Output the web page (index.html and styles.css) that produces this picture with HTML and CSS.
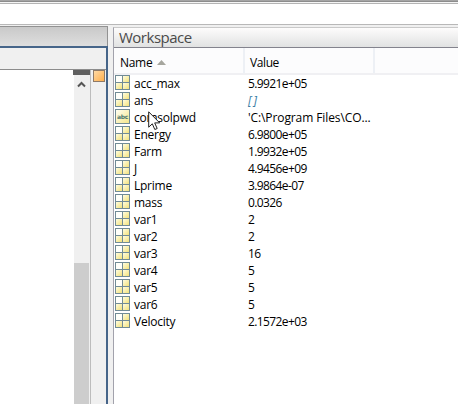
FILE: index.html
```html
<!DOCTYPE html>
<html lang="en">
<head>
<meta charset="utf-8">
<title>Workspace</title>
<link rel="stylesheet" href="styles.css">
</head>
<body>
<svg width="0" height="0" class="defs">
  <defs>
    <linearGradient id="cell" x1="0" y1="0" x2="1" y2="1"><stop offset="0" stop-color="#fffde0"/><stop offset="1" stop-color="#f3e27c"/></linearGradient>
    <symbol id="matrix" viewBox="0 0 15 15">
      <rect width="15" height="15" fill="#718b96"/>
      <rect x="1" y="1" width="6" height="6" fill="#fffffa"/>
      <rect x="8" y="1" width="6" height="6" fill="url(#cell)"/>
      <rect x="1" y="8" width="6" height="6" fill="url(#cell)"/>
      <rect x="8" y="8" width="6" height="6" fill="url(#cell)"/>
    </symbol>
  </defs>
</svg>
<div class="app">
  <div class="topbar"></div>
  <div class="main">
    <section class="editor">
      <div class="editor-title"></div>
      <div class="editor-frame">
        <div class="editor-tabs"></div>
        <div class="editor-body">
          <div class="page"></div>
          <div class="scroll">
            <div class="split"></div>
            <svg class="up" width="17" height="18" viewBox="0 0 17 18"><path d="M5 11.5 8.5 8l3.5 3.5" fill="none" stroke="#555" stroke-width="2"/></svg>
            <div class="thumb"></div>
          </div>
          <div class="messages"><div class="status"></div></div>
        </div>
      </div>
    </section>
    <section class="workspace">
      <div class="title"><span>Workspace</span></div>
      <div class="head">
        <div class="h-name"><span>Name</span><svg width="9" height="5"><path d="M0 5 4.5 0 9 5z" fill="#a6a69e"/></svg></div>
        <div class="h-value"><span>Value</span></div>
        <div class="h-rest"></div>
      </div>
      <div class="rows">
        <div class="row"><svg class="icon"><use href="#matrix"/></svg><span class="name">acc_max</span><span class="value">5.9921e+05</span></div>
        <div class="row"><svg class="icon"><use href="#matrix"/></svg><span class="name">ans</span><span class="value empty">[ ]</span></div>
        <div class="row"><i class="icon text-icon">abc</i><span class="name">comsolpwd</span><span class="value path">'C:\Program Files\CO...</span></div>
        <div class="row"><svg class="icon"><use href="#matrix"/></svg><span class="name">Energy</span><span class="value">6.9800e+05</span></div>
        <div class="row"><svg class="icon"><use href="#matrix"/></svg><span class="name">Farm</span><span class="value">1.9932e+05</span></div>
        <div class="row"><svg class="icon"><use href="#matrix"/></svg><span class="name">J</span><span class="value">4.9456e+09</span></div>
        <div class="row"><svg class="icon"><use href="#matrix"/></svg><span class="name">Lprime</span><span class="value">3.9864e-07</span></div>
        <div class="row"><svg class="icon"><use href="#matrix"/></svg><span class="name">mass</span><span class="value">0.0326</span></div>
        <div class="row"><svg class="icon"><use href="#matrix"/></svg><span class="name">var1</span><span class="value">2</span></div>
        <div class="row"><svg class="icon"><use href="#matrix"/></svg><span class="name">var2</span><span class="value">2</span></div>
        <div class="row"><svg class="icon"><use href="#matrix"/></svg><span class="name">var3</span><span class="value">16</span></div>
        <div class="row"><svg class="icon"><use href="#matrix"/></svg><span class="name">var4</span><span class="value">5</span></div>
        <div class="row"><svg class="icon"><use href="#matrix"/></svg><span class="name">var5</span><span class="value">5</span></div>
        <div class="row"><svg class="icon"><use href="#matrix"/></svg><span class="name">var6</span><span class="value">5</span></div>
        <div class="row"><svg class="icon"><use href="#matrix"/></svg><span class="name">Velocity</span><span class="value">2.1572e+03</span></div>
      </div>
    </section>
  </div>
  <svg class="cursor" width="13" height="20" viewBox="0 0 13 20"><path d="M.7.8v15.4l3.6-3.4 2.5 5.7 2.4-1-2.5-5.6h5z" fill="#fff" stroke="#222" stroke-width="1"/></svg>
</div>
</body>
</html>
```
FILE: styles.css
```css
* { box-sizing: border-box; }
body {
  margin: 0;
  overflow: hidden;
  background: #fff;
  color: #000;
  font: 12px/17px "Open Sans", "Noto Sans", sans-serif;
}
.defs { position: absolute; }
.app {
  display: flex;
  flex-direction: column;
  width: 458px;
  height: 404px;
  position: relative;
}
.topbar {
  height: 25px;
  flex: none;
  background: linear-gradient(#a4a4a4 0 1px, #8c8c8c 1px 2px, #f4f4f4 2px 3px, #b4b4b4 3px 4px, #fff 4px 24px, #b8b8b8 24px);
}
.main { flex: 1; display: flex; background: #f0f0f0; min-height: 0; }
.editor {
  width: 108px;
  flex: none;
  display: flex;
  flex-direction: column;
  padding-top: 1px;
}
.editor-title {
  height: 20px;
  flex: none;
  border-top: 1px solid #929292;
  border-right: 1px solid #929292;
  background: linear-gradient(#c9c9c9, #dedede);
}
.editor-frame {
  flex: 1;
  display: flex;
  flex-direction: column;
  border-top: 2px solid #466589;
  border-right: 2px solid #466589;
}
.editor-tabs { height: 22px; flex: none; border-bottom: 1px solid #8c8c8c; }
.editor-body { flex: 1; display: flex; }
.page { width: 74px; background: #fff; }
.scroll {
  width: 17px;
  display: flex;
  flex-direction: column;
  border-right: 1px solid #bcbcbc;
}
.split { width: 17px; height: 5px; margin-left: -1px; background: #606060; }
.up { height: 18px; margin-left: -1px; }
.thumb { width: 15px; flex: 1; margin-top: 170px; background: #cdcdcd; }
.messages { flex: 1; padding-left: 2px; }
.status {
  width: 12px;
  height: 12px;
  border: 1px solid #8e7a68;
  background: linear-gradient(135deg, #ffd9a5, #ffaf4c);
}
.workspace {
  flex: 1;
  margin: 2px 0 0 5px;
  border-top: 1px solid #c9c9c9;
  border-left: 1px solid #a2a2ac;
}
.title {
  height: 20px;
  padding-left: 5px;
  border-bottom: 1px solid #83838d;
  background: linear-gradient(#fdfcfc, #e1e2e2);
  font-size: 15px;
  line-height: 19px;
  color: #4a4a4a;
}
.title span { letter-spacing: -0.5px; }
.head {
  display: flex;
  height: 27px;
  line-height: 29px;
  background: #fcfcfd;
  border-bottom: 2px solid #f0f0f3;
}
.h-name { width: 131px; padding-left: 6px; border-right: 2px solid #edf0f5; }
.h-name span { letter-spacing: -0.3px; }
.h-name svg { margin-left: 5px; vertical-align: 2px; }
.h-value { width: 130px; padding-left: 5px; border-right: 2px solid #edf0f5; }
.h-value span { letter-spacing: -0.4px; }
.h-rest { flex: 1; }
.rows { background: #fff; height: 329px; }
.row { display: flex; height: 17px; line-height: 18px; padding-left: 1px; white-space: pre; }
.icon { width: 15px; height: 15px; flex: none; }
.text-icon {
  border: 1px solid #718b96;
  background: linear-gradient(135deg, #fffef3, #f5e68a);
  font: bold 6px/14px "DejaVu Sans", sans-serif;
  letter-spacing: -0.3px;
  text-align: center;
  color: #4b7770;
}
.name { width: 114px; padding-left: 4px; letter-spacing: -0.25px; }
.value { padding-left: 4px; letter-spacing: -0.6px; }
.empty { font-style: italic; color: #397da5; }
.path { letter-spacing: -0.1px; }
.cursor { position: absolute; left: 148px; top: 111px; }
```
